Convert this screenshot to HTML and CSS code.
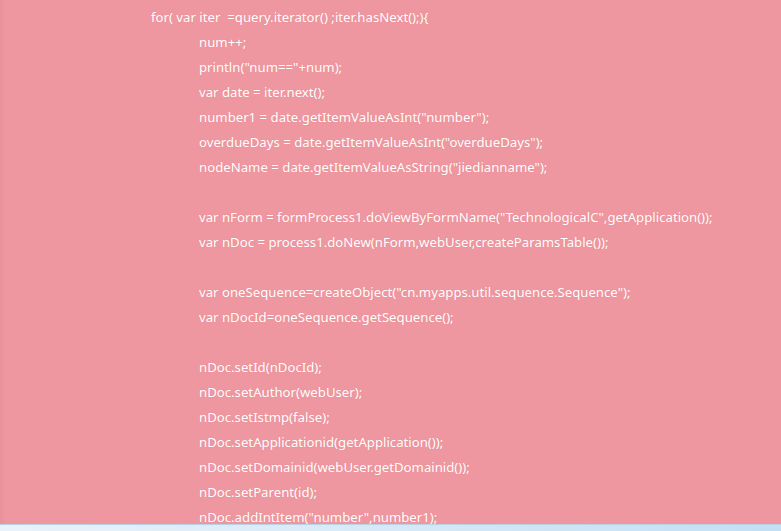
FILE: index.html
```html
<!DOCTYPE html>
<html>
<head>
<meta charset="utf-8">
<link rel="stylesheet" href="styles.css">
</head>
<body>
<div class="page">
  <div class="pane">
    <div class="edge"></div>
    <div class="code">
      <div class="l">for( var iter  =query.iterator() ;iter.hasNext();){</div>
      <div class="l in">num++;</div>
      <div class="l in">println("num=="+num);</div>
      <div class="l in">var date = iter.next();</div>
      <div class="l in">number1 = date.getItemValueAsInt("number");</div>
      <div class="l in">overdueDays = date.getItemValueAsInt("overdueDays");</div>
      <div class="l in">nodeName = date.getItemValueAsString("jiedianname");</div>
      <div class="l in"></div>
      <div class="l in">var nForm = formProcess1.doViewByFormName("TechnologicalC",getApplication());</div>
      <div class="l in">var nDoc = process1.doNew(nForm,webUser,createParamsTable());</div>
      <div class="l in"></div>
      <div class="l in">var oneSequence=createObject("cn.myapps.util.sequence.Sequence");</div>
      <div class="l in">var nDocId=oneSequence.getSequence();</div>
      <div class="l in"></div>
      <div class="l in">nDoc.setId(nDocId);</div>
      <div class="l in">nDoc.setAuthor(webUser);</div>
      <div class="l in">nDoc.setIstmp(false);</div>
      <div class="l in">nDoc.setApplicationid(getApplication());</div>
      <div class="l in">nDoc.setDomainid(webUser.getDomainid());</div>
      <div class="l in">nDoc.setParent(id);</div>
      <div class="l in">nDoc.addIntItem("number",number1);</div>
    </div>
  </div>
  <div class="bar"></div>
</div>
</body>
</html>
```

FILE: styles.css
```css
html, body {
  margin: 0;
  padding: 0;
  width: 781px;
  height: 531px;
  overflow: hidden;
}
.page {
  display: flex;
  flex-direction: column;
  height: 531px;
}
.pane {
  position: relative;
  height: 524px;
  flex: none;
  background: #ef97a0;
  overflow: hidden;
}
.edge {
  position: absolute;
  left: 0;
  top: 0;
  bottom: 0;
  width: 6px;
  background: linear-gradient(to right, #e8919a, #ef97a0);
}
.code {
  padding: 5px 0 0 151px;
  font-family: "Noto Sans", "Open Sans", sans-serif;
  font-size: 13.2px;
  line-height: 25px;
  color: #fff;
  text-shadow: 0 0 1px rgba(200, 90, 100, 0.35);
}
.l {
  height: 25px;
  white-space: pre;
}
.in {
  padding-left: 48px;
}
.bar {
  height: 7px;
  flex: none;
  border-top: 1px solid #b9d3e6;
  box-sizing: border-box;
  background: linear-gradient(to right, #e9f2fa, #c3dff4);
}
```
